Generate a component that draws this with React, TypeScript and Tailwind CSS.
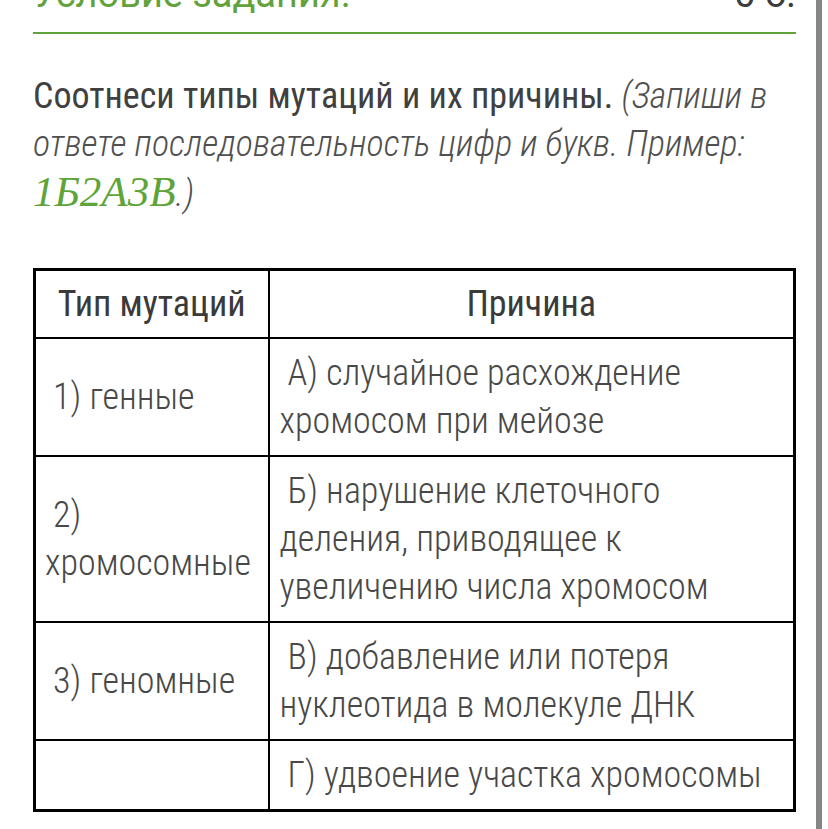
import React from "react";

const rows = [
  { type: ["\u00a01) генные"], cause: ["\u00a0А) случайное расхождение", "хромосом при мейозе"] },
  { type: ["\u00a02)", "хромосомные"], cause: ["\u00a0Б) нарушение клеточного", "деления, приводящее к", "увеличению числа хромосом"] },
  { type: ["\u00a03) геномные"], cause: ["\u00a0В) добавление или потеря", "нуклеотида в молекуле ДНК"] },
  { type: [], cause: ["\u00a0Г) удвоение участка хромосомы"] },
];

export default function App() {
  return (
    <div className="flex min-h-[829px] w-[828px] overflow-hidden bg-white font-['Roboto',sans-serif] font-stretch-condensed">
      <main className="flex-1 pl-[33px] pr-[20px]">
        {/* заголовок обрезан сверху */}
        <div className="mt-[-32px] flex items-start justify-between border-b-2 border-[#62a23b] pb-[12px] text-[38px] leading-[52px] font-stretch-normal">
          <span className="text-[#62a23b]">Условие задания.</span>
          <span className="text-[#3c3c3c]">0 б.</span>
        </div>

        <p className="mt-[38px] whitespace-nowrap text-[36px] leading-[48px] text-[#404040]">
          Соотнеси типы мутаций и их причины.{" "}
          <span className="font-light italic text-[#505050]">
            (Запиши в
            <br />
            ответе последовательность цифр и букв. Пример:
            <br />
            <span className="font-['Liberation_Serif',serif] text-[43px] font-normal text-[#5ea438] font-stretch-normal">
              1Б2А3В
            </span>
            .)
          </span>
        </p>

        <table className="mt-[50px] w-full table-fixed border-collapse border-[3px] border-black text-[36px] leading-[48px]">
          <colgroup>
            <col className="w-[234px]" />
            <col />
          </colgroup>
          <thead>
            <tr>
              <th className="border-2 border-black py-[9px] text-center font-normal text-[#3a3a3a]">Тип мутаций</th>
              <th className="border-2 border-black py-[9px] text-center font-normal text-[#3a3a3a]">Причина</th>
            </tr>
          </thead>
          <tbody className="font-light text-[#484848]">
            {rows.map((r, i) => (
              <tr key={i}>
                <td className="border-2 border-black px-[9px] py-[10px] align-middle whitespace-nowrap">
                  {r.type.map((l, j) => (
                    <div key={j}>{l}</div>
                  ))}
                </td>
                <td className="border-2 border-black px-[10px] py-[10px] align-middle whitespace-nowrap">
                  {r.cause.map((l, j) => (
                    <div key={j}>{l}</div>
                  ))}
                </td>
              </tr>
            ))}
          </tbody>
        </table>
      </main>
      <div className="w-[6px] shrink-0 bg-[#868686]" />
      <div className="w-[6px] shrink-0" />
    </div>
  );
}
